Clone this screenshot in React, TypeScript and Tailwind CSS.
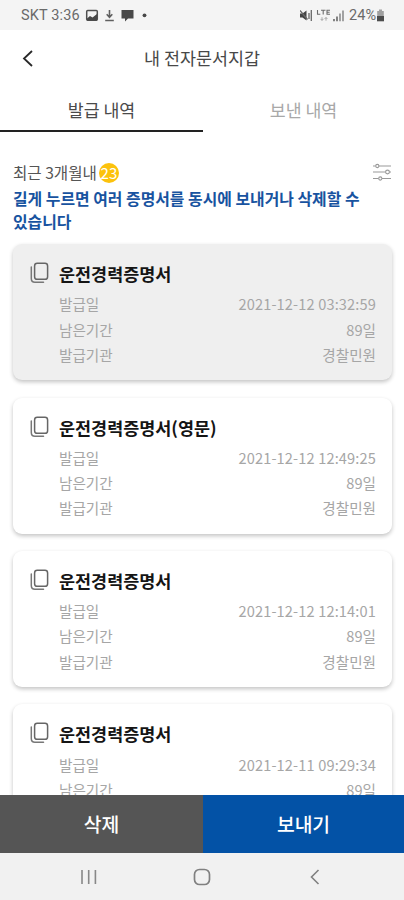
import React from "react";

type Doc = { title: string; issued: string; remaining: string; agency: string; selected?: boolean };

const docs: Doc[] = [
  { title: "운전경력증명서", issued: "2021-12-12 03:32:59", remaining: "89일", agency: "경찰민원", selected: true },
  { title: "운전경력증명서(영문)", issued: "2021-12-12 12:49:25", remaining: "89일", agency: "경찰민원" },
  { title: "운전경력증명서", issued: "2021-12-12 12:14:01", remaining: "89일", agency: "경찰민원" },
  { title: "운전경력증명서", issued: "2021-12-11 09:29:34", remaining: "89일", agency: "경찰민원" },
];

function StatusBar() {
  return (
    <div className="flex h-[30px] shrink-0 items-center bg-[#f4f4f4] pt-[2px] pl-[21px] pr-[19px] font-[Roboto,sans-serif] text-[14.5px] text-[#6a6a6a]">
      <span className="w-[64px] whitespace-nowrap tracking-[0.15px]">SKT 3:36</span>
      <svg width="64" height="14" viewBox="0 0 64 14" fill="none">
        <rect x="1.7" y="1.6" width="10.6" height="9.6" rx="1" stroke="#505050" strokeWidth="1.5" />
        <path d="M2 9.5 5 7l2.5 1.5L12 5v6.5H2Z" fill="#484848" />
        <path d="M24.5 1v7M21.7 5.3l2.8 3 2.8-3M20.2 11.5h8.6" stroke="#606060" strokeWidth="1.6" />
        <path d="M36.5 1h12v8.5h-5.5L40 12.5v-3h-3.5Z" fill="#484848" />
        <circle cx="59.5" cy="6.3" r="1.9" fill="#484848" />
      </svg>
      <span className="grow" />
      <svg width="46" height="16" viewBox="0 0 46 16" fill="none" className="mr-[3px]">
        <path d="M0 5.5h2.500l4-3v10l-4-3H0Z" fill="#444" />
        <path d="m0 2.500 7.500 9M9 5v6M11.300 2v11" stroke="#686868" strokeWidth="1.3" />
        <path d="M17.500 2v4.200h2.800M21 2.300h4.500M23.200 2v4.500M30 2.300h-3v4h3M27 4.300h2.600" stroke="#6c6c6c" strokeWidth="1.1" />
        <path d="M22 9.200v3M20.600 10.900l1.400 1.600 1.400-1.600M26 12.700v-3M24.600 11 26 9.400l1.400 1.600" stroke="#999" strokeWidth=".8" />
        <path d="M34 11v2.200M37 8.600v4.600" stroke="#777" strokeWidth="1.8" />
        <path d="M40 5.500v7.700M43 2.400v10.800" stroke="#999" strokeWidth="1.8" />
      </svg>
      <span className="whitespace-nowrap">24%</span>
      <svg width="9" height="14" viewBox="0 0 9 14">
        <path d="M3 0.6h3v1.5h1.8V8H1.2V2.1H3Z" fill="#a0a0a0" />
        <path d="M1 7h7v5.3H1Z" fill="#4c4c4c" />
      </svg>
    </div>
  );
}

function Row({ label, value, wide }: { label: string; value: string; wide?: boolean }) {
  return (
    <div className="flex h-[25.3px] items-center justify-between">
      <span>{label}</span>
      <span className={wide ? "tracking-[0.14px]" : ""}>{value}</span>
    </div>
  );
}

function Card({ doc }: { doc: Doc }) {
  return (
    <div
      className={`mb-[17.4px] flex h-[136px] shrink-0 rounded-[9px] pl-[17px] pr-4 pt-[17px] shadow-[0_2px_4px_rgba(0,0,0,0.24)] ${doc.selected ? "bg-[#efefef]" : "bg-white"}`}
    >
      <svg width="20" height="22" viewBox="0 0 20 22" fill="none" className="mt-px shrink-0">
        <rect x="4.6" y="1.3" width="13" height="16" rx="2.6" stroke="#666" strokeWidth="1.5" />
        <path d="M1.3 5v11.4q0 3.8 3.6 3.8h8.6" stroke="#777" strokeWidth="1.5" strokeLinecap="round" />
      </svg>
      <div className="ml-[9px] grow">
        <h2 className="mb-[5.5px] h-[25px] text-[17.45px] leading-[25px] font-bold text-[#151515]">{doc.title}</h2>
        <div className="text-[14.6px] leading-[20px] text-[#a6a6a6]">
          <Row label="발급일" value={doc.issued} wide />
          <Row label="남은기간" value={doc.remaining} />
          <Row label="발급기관" value={doc.agency} />
        </div>
      </div>
    </div>
  );
}

export default function App() {
  return (
    <div className="flex h-[900px] w-[404px] flex-col overflow-hidden bg-white font-['Noto_Sans_CJK_KR',sans-serif]">
      <StatusBar />
      <header className="grid h-[57px] shrink-0 grid-cols-[60px_1fr_60px] items-center">
        <button className="pl-[22px]" aria-label="뒤로">
          <svg width="12" height="18" viewBox="0 0 12 18" fill="none">
            <path d="M10 1 2 8.500l8 7.500" stroke="#282828" strokeWidth="1.8" />
          </svg>
        </button>
        <h1 className="text-center text-[17.4px] text-[#484848]">내 전자문서지갑</h1>
      </header>
      <nav className="flex h-[45px] shrink-0 text-center text-[17.3px] leading-[45px]">
        <div className="w-[203px] border-b-2 border-[#222] text-[#4a4a4a]">발급 내역</div>
        <div className="grow text-[#a8a8a8]">보낸 내역</div>
      </nav>
      <main className="flex min-h-0 grow flex-col overflow-hidden pt-[29px] pr-[12px] pl-[13px]">
        <div className="flex h-[24px] shrink-0 items-center text-[15.6px] text-[#555]">
          <span>최근 3개월내</span>
          <span className="ml-[2px] flex size-[20px] items-center justify-center rounded-full bg-[#fcc20c] text-[15px] text-white">23</span>
          <span className="grow" />
          <svg width="20" height="18" viewBox="0 0 20 18" fill="none" stroke="#999" strokeWidth="1.1" className="-mt-[2px]">
            <path d="M1 3h2.5M7 3h12M1 9h12.5M17.5 9H19M1 15.5h5.5M10 15.5h9" />
            <circle cx="5.3" cy="3" r="1.6" />
            <circle cx="15.5" cy="9" r="1.9" />
            <circle cx="8.3" cy="15.5" r="1.6" />
          </svg>
        </div>
        <p className="mt-[1.5px] mb-[11.7px] shrink-0 text-[15.88px] leading-[23px] font-bold whitespace-nowrap text-[#1853a0]">
          길게 누르면 여러 증명서를 동시에 보내거나 삭제할 수
          <br />
          있습니다
        </p>
        {docs.map((doc) => (
          <Card key={doc.issued} doc={doc} />
        ))}
      </main>
      <div className="flex h-[58px] shrink-0 text-center text-[19.3px] leading-[58px] font-medium text-white">
        <button className="w-[203px] bg-[#555]">삭제</button>
        <button className="grow bg-[#0352a6]">보내기</button>
      </div>
      <div className="flex h-[47px] shrink-0 items-center bg-[#f1f1f1] pl-[80px]">
        <svg width="18" height="16" viewBox="0 0 18 16" stroke="#888" strokeWidth="1.6">
          <path d="M2 1v14M8.7 1v14M15.4 1v14" />
        </svg>
        <svg width="18" height="18" viewBox="0 0 18 18" fill="none" stroke="#808080" strokeWidth="1.7" className="ml-[95px]">
          <rect x="1.5" y="1.5" width="15" height="15" rx="5" />
        </svg>
        <svg width="12" height="18" viewBox="0 0 12 18" fill="none" stroke="#808080" strokeWidth="1.6" className="ml-[98px]">
          <path d="M9.5 2 2.5 9l7 7" />
        </svg>
      </div>
    </div>
  );
}
